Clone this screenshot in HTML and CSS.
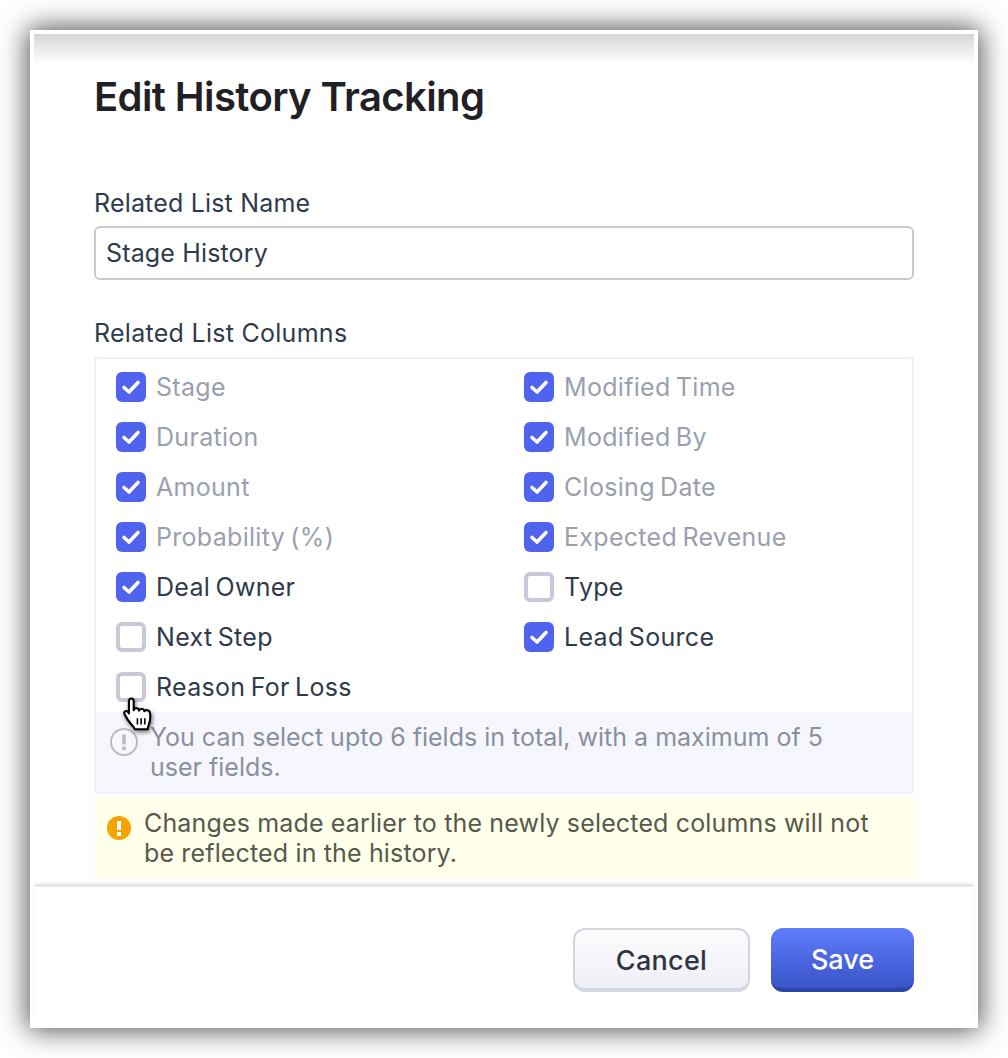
FILE: index.html
```html
<!DOCTYPE html>
<html lang="en">
<head>
  <meta charset="UTF-8" />
  <meta name="viewport" content="width=device-width, initial-scale=1.0" />
  <title>Edit History Tracking</title>
  <link rel="stylesheet" href="styles.css">
</head>
<body>
  <svg class="defs" width="0" height="0">
    <symbol id="tick" viewBox="0 0 30 30">
      <path d="M8 15.500l5 4.500 9-9.500" fill="none" stroke="#fff" stroke-width="3.600" stroke-linecap="round" stroke-linejoin="round" />
    </symbol>
  </svg>

  <div class="dialog">
    <div class="content">
      <h1 class="title">Edit History Tracking</h1>

      <label class="field-label">Related List Name</label>
      <div class="text-input">Stage History</div>

      <label class="field-label columns-label">Related List Columns</label>
      <div class="columns">
        <div class="column-grid">
          <div class="option locked"><span class="box on"><svg><use href="#tick" /></svg></span>Stage</div>
          <div class="option locked"><span class="box on"><svg><use href="#tick" /></svg></span>Modified Time</div>
          <div class="option locked"><span class="box on"><svg><use href="#tick" /></svg></span>Duration</div>
          <div class="option locked"><span class="box on"><svg><use href="#tick" /></svg></span>Modified By</div>
          <div class="option locked"><span class="box on"><svg><use href="#tick" /></svg></span>Amount</div>
          <div class="option locked"><span class="box on"><svg><use href="#tick" /></svg></span>Closing Date</div>
          <div class="option locked"><span class="box on"><svg><use href="#tick" /></svg></span>Probability (%)</div>
          <div class="option locked"><span class="box on"><svg><use href="#tick" /></svg></span>Expected Revenue</div>
          <div class="option"><span class="box on"><svg><use href="#tick" /></svg></span>Deal Owner</div>
          <div class="option"><span class="box"></span>Type</div>
          <div class="option"><span class="box"></span>Next Step</div>
          <div class="option"><span class="box on"><svg><use href="#tick" /></svg></span>Lead Source</div>
          <div class="option"><span class="box"></span>Reason For Loss</div>
        </div>
        <div class="info-note">
          <svg class="info-icon" viewBox="0 0 30 30">
            <circle cx="15" cy="15" r="13" fill="none" stroke="#b9bcc6" stroke-width="2" />
            <rect x="13.200" y="7.500" width="3.600" height="10" fill="#b9bcc6" />
            <rect x="13.200" y="19.500" width="3.600" height="3.600" fill="#b9bcc6" />
          </svg>
          <span>You can select upto 6 fields in total, with a maximum of 5 user fields.</span>
        </div>
        <!-- mouse pointer caught in the screenshot -->
        <svg class="hand" viewBox="0 0 30 34">
          <path d="M5.500 4c0-3.500 4.500-3.500 4.500 0v8.500c.5-2.500 5-2.500 5 .5.5-2.300 5-2.300 5 .5 1-1.800 5-1.500 5.300 1.500.6 3 .5 6-.5 9.500-.8 2.500-1.500 4-1.500 6H11c-.5-2-2-3-4-5.500-2-2.500-4-5.500-5.500-8.500-1.500-2.500 1.500-4.500 3-2.500l1 1.500z" fill="#fff" stroke="#000" stroke-width="2" stroke-linejoin="round" />
          <path d="M13.500 20v6M17 20v6M20.500 20v6" stroke="#000" stroke-width="1.500" />
        </svg>
      </div>

      <div class="warning-note">
        <svg class="warning-icon" viewBox="0 0 24 24">
          <circle cx="12" cy="12" r="12" fill="#f5a300" />
          <rect x="10" y="5" width="4" height="9" fill="#fff" />
          <rect x="10" y="16" width="4" height="4" fill="#fff" />
        </svg>
        <span>Changes made earlier to the newly selected columns will not be reflected in the history.</span>
      </div>
    </div>

    <div class="footer">
      <button class="btn btn-cancel">Cancel</button>
      <button class="btn btn-save">Save</button>
    </div>
  </div>
</body>
</html>
```

FILE: styles.css
```css
* {
  box-sizing: border-box;
}
html, body {
  margin: 0;
  height: 1058px;
  overflow: hidden;
  background: #fff;
}
body {
  padding: 30px;
  font-family: Inter, "Liberation Sans", sans-serif;
}
.defs {
  position: absolute;
}
.dialog {
  height: 998px;
  display: flex;
  flex-direction: column;
  border: 4px solid #fff;
  background: #fff linear-gradient(#d6d6d6, #fff) no-repeat 0 0 / 100% 30px;
  background-clip: padding-box;
  box-shadow: 0 0 26px 2px rgba(0, 0, 0, 0.7);
}
.content {
  flex: 1;
  padding: 0 60px;
}
.title {
  margin: 37px 0 0;
  font-size: 40px;
  line-height: 52px;
  font-weight: 600;
  letter-spacing: -0.6px;
  color: #1f2126;
}
.field-label {
  display: block;
  margin-top: 64px;
  font-size: 25px;
  line-height: 32px;
  letter-spacing: 0.18px;
  color: #2f3a4c;
}
.columns-label {
  margin-top: 37px;
  letter-spacing: 0.28px;
}
.text-input {
  height: 54px;
  margin-top: 7px;
  padding-left: 10px;
  border: 2px solid #c8c8d8;
  border-radius: 6px;
  font-size: 25px;
  line-height: 50px;
  letter-spacing: 0.15px;
  color: #2f3a4c;
}
.columns {
  position: relative;
  margin-top: 8px;
  height: 437px;
  border: 2px solid #f0f0f5;
  border-radius: 3px;
}
.column-grid {
  display: grid;
  grid-template-columns: 408px 1fr;
  grid-auto-rows: 50px;
  padding: 3px 0 0 20px;
}
.option {
  display: flex;
  align-items: center;
  gap: 10px;
  font-size: 25px;
  letter-spacing: 0.3px;
  word-spacing: -2px;
  color: #2f3a4c;
}
.option.locked {
  color: #9a9fae;
}
.box {
  flex: none;
  width: 30px;
  height: 30px;
  border: 4px solid #c8c8d8;
  border-radius: 6px;
  background: #fff;
}
.box.on {
  border: 0;
  background: #5063ee;
}
.box svg {
  display: block;
  width: 30px;
  height: 30px;
}
.info-note {
  display: flex;
  gap: 11px;
  height: 80px;
  padding: 10px 80px 0 13px;
  background: #f6f7fe;
  font-size: 25px;
  line-height: 30px;
  color: #8a8f9e;
}
.info-icon {
  flex: none;
  width: 30px;
  height: 30px;
  margin-top: 5px;
}
.hand {
  position: absolute;
  left: 27px;
  top: 338px;
  width: 32px;
  height: 36px;
  filter: drop-shadow(1px 2px 2px rgba(0, 0, 0, 0.55));
}
.warning-note {
  display: flex;
  gap: 13px;
  height: 80px;
  margin-top: 4px;
  padding: 10px 30px 0 13px;
  background: #ffffea;
  font-size: 25px;
  line-height: 30px;
  letter-spacing: 0.15px;
  color: #56594e;
}
.warning-icon {
  flex: none;
  width: 24px;
  height: 24px;
  margin-top: 8px;
}
.footer {
  display: flex;
  justify-content: flex-end;
  gap: 21px;
  height: 138px;
  padding: 41px 60px 0;
  border-top: 1px solid #eee;
  box-shadow: 0 -3px 3px -1px rgba(0, 0, 0, 0.14);
  background: #fff;
}
.btn {
  height: 64px;
  padding: 3px 0 0;
  border-radius: 12px;
  font-family: inherit;
  font-size: 27px;
  font-weight: 500;
}
.btn-cancel {
  width: 177px;
  border: 2px solid #d2d5e2;
  border-bottom-width: 4px;
  letter-spacing: 0.3px;
  background: linear-gradient(#fdfdfe, #eeeef6);
  color: #2f3442;
}
.btn-save {
  width: 143px;
  border: 0;
  border-bottom: 4px solid #2c43a8;
  background: linear-gradient(#5f7cfb, #3a54c8);
  color: #fff;
}
```
